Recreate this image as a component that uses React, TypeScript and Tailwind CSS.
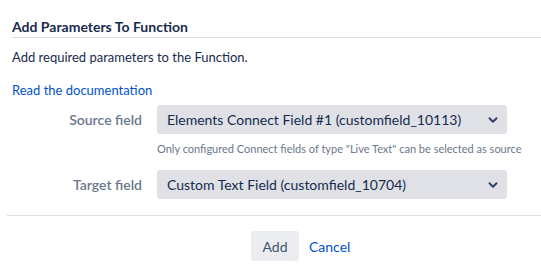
import { ChevronDown } from "lucide-react";

const fields = [
  {
    label: "Source field",
    value: "Elements Connect Field #1 (customfield_10113)",
    hint: 'Only configured Connect fields of type "Live Text" can be selected as source',
  },
  { label: "Target field", value: "Custom Text Field (customfield_10704)" },
];

export default function App() {
  return (
    <div className="h-[274px] w-[541px] bg-white font-['Lato',sans-serif] text-[13px] text-[#172B4D]">
      <div className="pl-3 pt-[17px]">
        <h2 className="border-b border-[#dddddd] text-[14px] font-bold leading-[20px]">
          Add Parameters To Function
        </h2>
      </div>
      <div className="px-3 pt-[9px]">
        <p className="leading-[20px]">Add required parameters to the Function.</p>
        <a href="#" className="mt-[13px] block leading-[20px] text-[#0052CC]">
          Read the documentation
        </a>
      </div>
      <div className="mt-[5px] flex flex-col gap-[13px]">
        {fields.map((f) => (
          <div key={f.label}>
            <div className="flex items-center">
              <label className="w-[142px] text-right text-[14px] font-semibold text-[#6B778C]">{f.label}</label>
              <div className="ml-[15px] flex h-[29px] w-[350px] items-center justify-between rounded-[3px] bg-[#DFE1E6] pl-[10px] pr-[7px] text-[14px]">
                <span>{f.value}</span>
                <ChevronDown className="h-[14px] w-[14px] text-[#344563]" strokeWidth={3.5} />
              </div>
            </div>
            {f.hint && (
              <div className="ml-[157px] mt-[7px] text-[11px] leading-[16px] text-[#6B778C]">{f.hint}</div>
            )}
          </div>
        ))}
      </div>
      <div className="ml-[7px] mt-[16px] border-t border-[#dddddd]" />
      <div className="ml-[251px] mt-[15px] flex items-center gap-[10px]">
        <button className="h-[30px] w-[48px] rounded-[3px] bg-[#EBECF0] text-[14px] text-[#42526E]">Add</button>
        <a href="#" className="text-[14px] text-[#0052CC]">Cancel</a>
      </div>
    </div>
  );
}
